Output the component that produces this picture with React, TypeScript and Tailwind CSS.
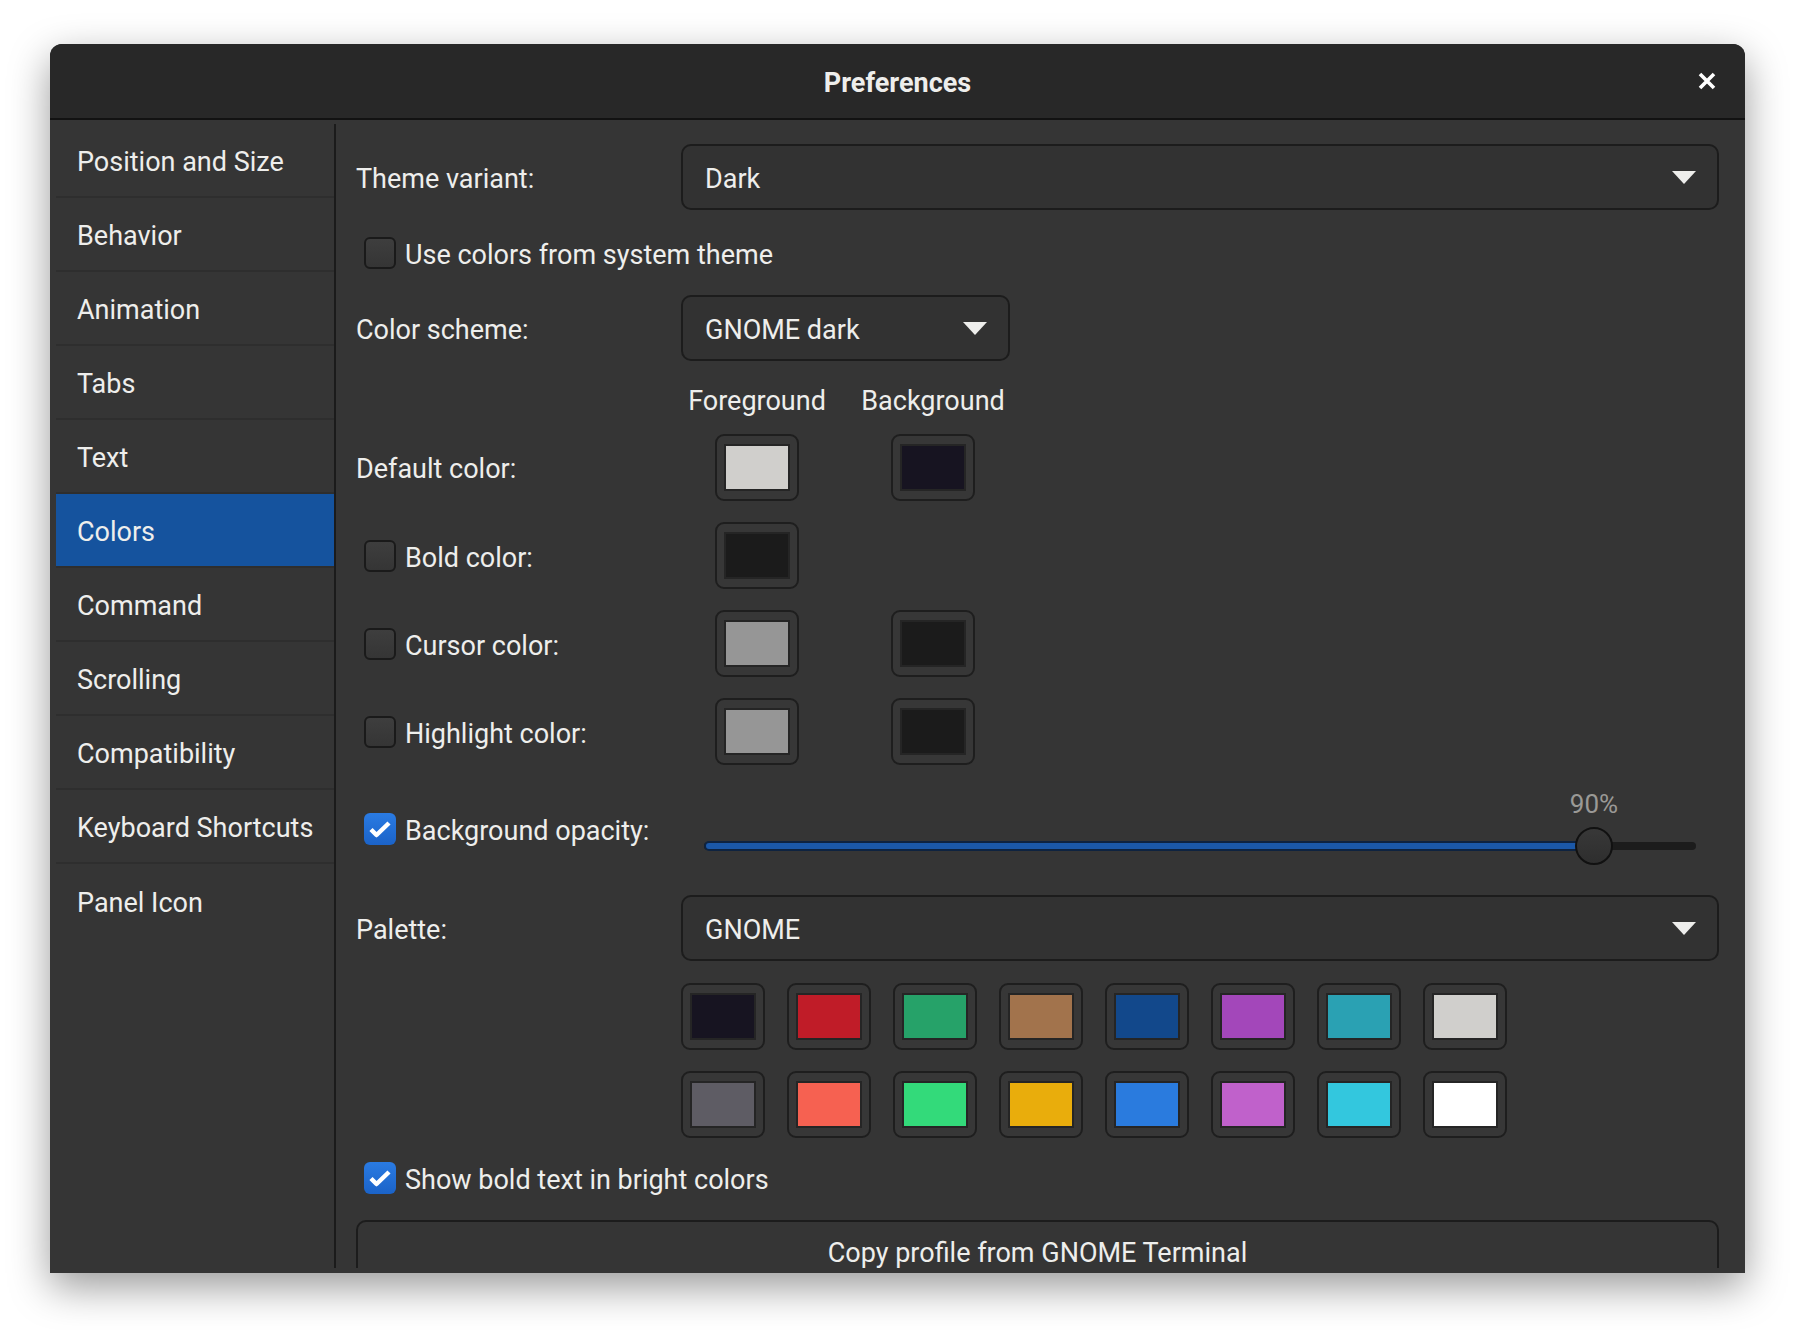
import clsx from 'clsx'

const sections = [
  'Position and Size',
  'Behavior',
  'Animation',
  'Tabs',
  'Text',
  'Colors',
  'Command',
  'Scrolling',
  'Compatibility',
  'Keyboard Shortcuts',
  'Panel Icon',
]

const palette = [
  'bg-[#171421]', 'bg-[#c01c28]', 'bg-[#26a269]', 'bg-[#a2734c]',
  'bg-[#12488b]', 'bg-[#a347ba]', 'bg-[#2aa1b3]', 'bg-[#d0cfcc]',
  'bg-[#5e5c64]', 'bg-[#f66151]', 'bg-[#33da7a]', 'bg-[#e9ad0c]',
  'bg-[#2a7bde]', 'bg-[#c061cb]', 'bg-[#33c7de]', 'bg-[#ffffff]',
]

function Check({ on }: { on?: boolean }) {
  if (on) {
    return (
      <span className="flex h-[32px] w-[32px] shrink-0 items-center justify-center rounded-[6px] bg-linear-to-b from-[#2a7be3] to-[#1b63c8]">
        <svg width="32" height="32" viewBox="0 0 32 32">
          <path d="M7 16.5l5.5 5.5L25 10" fill="none" stroke="#fff" strokeWidth="4.5" strokeLinejoin="round" />
        </svg>
      </span>
    )
  }
  return <span className="h-[32px] w-[32px] shrink-0 rounded-[6px] border-2 border-[#1a1a1a] bg-linear-to-b from-[#3e3e3e] to-[#353535]" />
}

function CheckLabel({ on, children }: { on?: boolean; children: React.ReactNode }) {
  return (
    <label className="flex items-center gap-[9px] pl-[8px] leading-[32px]">
      <Check on={on} />
      <span className="translate-y-[2px]">{children}</span>
    </label>
  )
}

function Combo({ value, className }: { value: string; className?: string }) {
  return (
    <div className={clsx('flex h-[66px] items-center justify-between rounded-[10px] border-2 border-[#1c1c1c] bg-[#323232] pl-[22px] pr-[21px]', className)}>
      <span className="translate-y-[2px]">{value}</span>
      <svg width="24" height="13" viewBox="0 0 24 13">
        <path d="M0 0h24L12 13z" fill="#eeeeec" />
      </svg>
    </div>
  )
}

function Swatch({ color }: { color: string }) {
  return (
    <div className="flex h-[67px] w-[84px] items-center justify-center rounded-[9px] border-2 border-[#1e1e1e] bg-[#373737]">
      <div className={clsx('h-[47px] w-[66px] border-2 border-[#252525]', color)} />
    </div>
  )
}

function ColorRow({ label, check, fg, bg }: { label: string; check?: boolean; fg: string; bg?: string }) {
  return (
    <div className="flex items-center">
      <div className="w-[325px] shrink-0">
        {check ? <CheckLabel>{label}</CheckLabel> : <span className="inline-block translate-y-[2px]">{label}</span>}
      </div>
      <div className="grid grid-cols-[152px_152px] gap-x-[24px]">
        <div className="flex justify-center"><Swatch color={fg} /></div>
        <div className="flex justify-center">{bg && <Swatch color={bg} />}</div>
      </div>
    </div>
  )
}

export default function App() {
  return (
    <div className="h-[1330px] w-[1796px] bg-white pl-[50px] pt-[44px] font-[family-name:Roboto,sans-serif] text-[27px] text-[#eeeeec]">
      <div className="flex h-[1229px] w-[1695px] flex-col overflow-hidden rounded-t-[12px] bg-[#353535] shadow-[0_14px_40px_rgba(0,0,0,0.4)]">
        <header className="grid h-[76px] grid-cols-[1fr_auto_1fr] items-center border-b-2 border-[#121212] bg-[#282828]">
          <span />
          <h1 className="translate-y-[2px] font-bold">Preferences</h1>
          <div className="flex justify-end pr-[29px]">
            <svg width="18" height="18" viewBox="0 0 18 18">
              <path d="M2 2l14 14M16 2L2 16" stroke="#fff" strokeWidth="3.6" />
            </svg>
          </div>
        </header>

        <div className="flex min-h-0 flex-1 pb-[5px] pl-[6px] pt-[4px]">
          <nav className="flex w-[278px] shrink-0 flex-col">
            {sections.map((s, i) => (
              <div
                key={s}
                className={clsx(
                  'flex h-[74px] items-center pl-[21px]',
                  i < sections.length - 1 && 'border-b-2 border-[#2e2e2e]',
                  s === 'Colors' && 'bg-[#15539e]'
                )}
              >
                <span className="translate-y-[2px]">{s}</span>
              </div>
            ))}
          </nav>

          <main className="flex min-w-0 flex-1 flex-col overflow-hidden border-l-2 border-[#1b1b1b] pl-[20px] pr-[26px] pt-[20px]">
            <div className="flex items-center">
              <span className="w-[325px] shrink-0 translate-y-[2px]">Theme variant:</span>
              <Combo value="Dark" className="flex-1" />
            </div>

            <div className="mt-[27px]">
              <CheckLabel>Use colors from system theme</CheckLabel>
            </div>

            <div className="mt-[26px] flex items-center">
              <span className="w-[325px] shrink-0 translate-y-[2px]">Color scheme:</span>
              <Combo value="GNOME dark" className="w-[329px]" />
            </div>

            <div className="mt-[22px] flex leading-[32px]">
              <span className="w-[325px] shrink-0" />
              <div className="grid translate-y-[2px] grid-cols-[152px_152px] gap-x-[24px]">
                <span className="text-center">Foreground</span>
                <span className="text-center">Background</span>
              </div>
            </div>

            <div className="mt-[19px] flex flex-col gap-[21px]">
              <ColorRow label="Default color:" fg="bg-[#d0cfcc]" bg="bg-[#171421]" />
              <ColorRow label="Bold color:" check fg="bg-[#1b1b1b]" />
              <ColorRow label="Cursor color:" check fg="bg-[#969696]" bg="bg-[#1b1b1b]" />
              <ColorRow label="Highlight color:" check fg="bg-[#969696]" bg="bg-[#1b1b1b]" />
            </div>

            <div className="mt-[25px] flex h-[78px] items-center">
              <div className="w-[348px] shrink-0">
                <CheckLabel on>Background opacity:</CheckLabel>
              </div>
              <div className="relative h-[78px] w-[992px]">
                <span className="absolute left-[890px] top-[1px] -translate-x-1/2 text-[26px] leading-[26px] text-[#9a9996]">90%</span>
                <div className="absolute left-0 right-0 top-[52px] h-[8px] rounded-full bg-[#1c1c1c]" />
                <div className="absolute left-0 top-[51px] h-[10px] w-[890px] rounded-full border-2 border-[#0e2340] bg-[#1b58a8]" />
                <div className="absolute left-[871px] top-[37px] h-[38px] w-[38px] rounded-full border-2 border-[#111] bg-linear-to-b from-[#383838] to-[#2e2e2e]" />
              </div>
            </div>

            <div className="mt-[27px] flex items-center">
              <span className="w-[325px] shrink-0 translate-y-[2px]">Palette:</span>
              <Combo value="GNOME" className="flex-1" />
            </div>

            <div className="mt-[22px] ml-[325px] grid w-fit grid-cols-[repeat(8,84px)] gap-x-[22px] gap-y-[21px]">
              {palette.map((c, i) => (
                <Swatch key={i} color={c} />
              ))}
            </div>

            <div className="mt-[24px]">
              <CheckLabel on>Show bold text in bright colors</CheckLabel>
            </div>

            <button className="mt-[26px] flex h-[66px] w-full shrink-0 items-center justify-center rounded-[10px] border-2 border-[#1c1c1c] bg-[#353535]">
              Copy profile from GNOME Terminal
            </button>
          </main>
        </div>
      </div>
    </div>
  )
}
